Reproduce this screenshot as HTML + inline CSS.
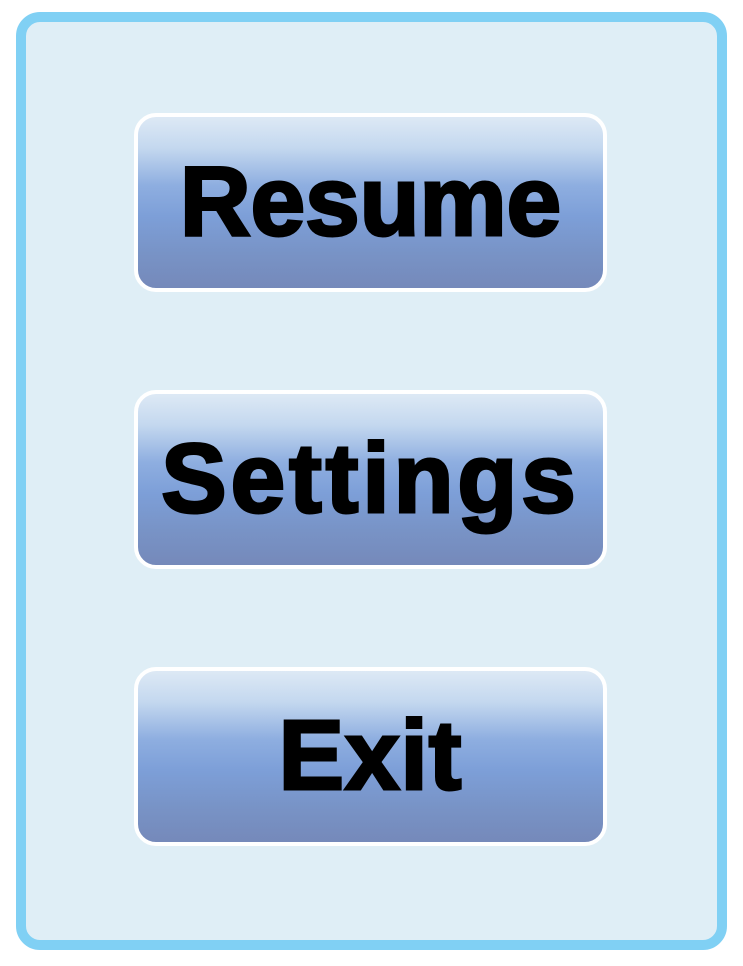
<!DOCTYPE html>
<html><head><style>
html,body{margin:0;padding:0;background:#fff;width:743px;height:966px;overflow:hidden}
.panel{position:absolute;left:16px;top:12px;width:691px;height:918px;border:10px solid #80d0f4;border-radius:24px;background:#dfeef6}
.btn{position:absolute;left:134px;width:465px;height:171px;border:4px solid #fff;border-radius:22px;
background:linear-gradient(180deg,#dde9f5 0%,#c4d8ef 18%,#8eaee0 40%,#7d9fd8 58%,#7893c6 80%,#7589ba 100%);
display:flex;align-items:center;justify-content:center;
font-family:"Liberation Sans",sans-serif;font-weight:bold;font-size:98px;color:#000;line-height:1}
.btn span{-webkit-text-stroke:3px #000;position:relative;top:-2px}
</style></head><body>
<div class="panel"></div>
<div class="btn" style="top:113px"><span>Resume</span></div>
<div class="btn" style="top:390px"><span style="letter-spacing:4px">Settings</span></div>
<div class="btn" style="top:667px"><span style="letter-spacing:1px">Exit</span></div>
</body></html>
